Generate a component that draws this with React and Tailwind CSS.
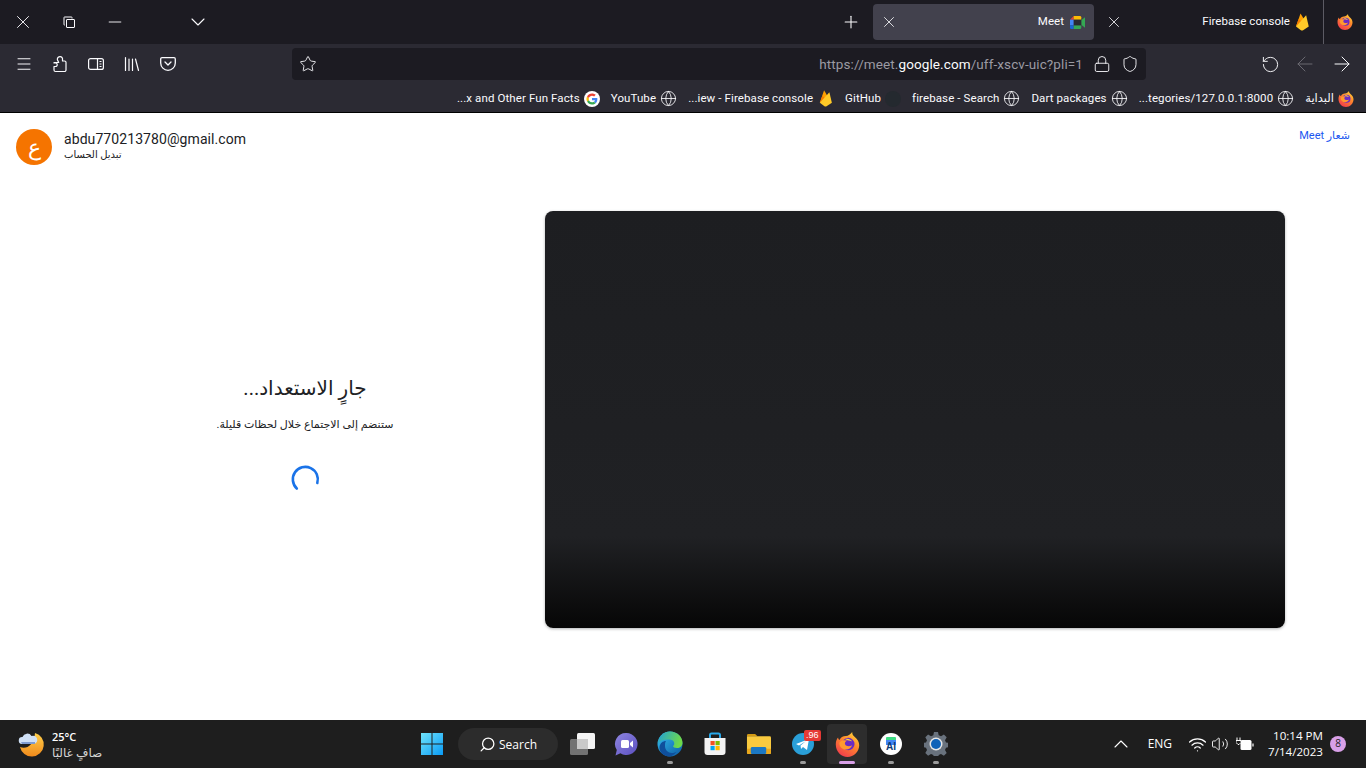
import {Plus, X, Minus, ChevronDown, ChevronUp, Menu, Star, Lock, Shield, RotateCw, ArrowLeft, ArrowRight, Globe, Search, Wifi, Volume2} from "lucide-react";

const uiFont = "font-['Roboto','Noto_Sans','DejaVu_Sans',sans-serif]";

const Firefox = ({size = 16, id = "ff"}) => (
    <svg width={size} height={size} viewBox="0 0 32 32">
        <defs>
            <linearGradient id={id} x1="0.8" y1="0" x2="0.2" y2="1">
                <stop offset="0" stopColor="#ffd43a" />
                <stop offset="0.4" stopColor="#ff8a2b" />
                <stop offset="1" stopColor="#f0364f" />
            </linearGradient>
        </defs>
        <path d="M22 0c0 3 1 4 3 6 4 3 6 7 6 11 0 8-7 15-15 15S1 25 1 16c0-4 1-7 3-9 0 2 1 3 2 3 1-3 4-5 8-5 3 0 6-2 8-5z" fill={`url(#${id})`} />
        <circle cx="17" cy="15.5" r="8" fill="#6a2bc4" />
        <path d="M6 13c3-3 7-3 10-2-3 1-4 3-3 5 1 2 5 3 9 1-2 6-10 7-14 3-2-2-3-5-2-7z" fill="#ff9a2e" />
        <path d="M13 9c3-1 7 0 9 3-3-1-6-1-9-3z" fill="#ffd43a" />
    </svg>
);

const Firebase = ({size = 18}) => (
    <svg width={size} height={size} viewBox="0 0 24 24">
        <path d="M4 18 10 0.5 14.5 8 12 12z" fill="#ffa000" />
        <path d="M4 18 7.5 8 12 12z" fill="#f57c00" />
        <path d="M4 18 17.5 3 21 18 13.5 23a3 3 0 0 1-3 0z" fill="#ffca28" />
    </svg>
);

const GoogleG = () => (
    <svg width="16" height="16" viewBox="0 0 24 24">
        <circle cx="12" cy="12" r="12" fill="#fff" />
        <path d="M20 12.2c0-.6 0-1.1-.2-1.7H12v3.200h4.500c-.2 1-.8 1.900-1.700 2.500l2.700 2.100c1.600-1.500 2.500-3.600 2.500-6.100z" fill="#4285f4" />
        <path d="M12 20.300c2.200 0 4.100-.7 5.500-2l-2.700-2.100c-.8.500-1.700.8-2.800.8-2.100 0-4-1.400-4.600-3.400l-2.800 2.200c1.400 2.700 4.200 4.500 7.400 4.500z" fill="#34a853" />
        <path d="M7.400 13.600c-.3-1-.3-2.100 0-3.200L4.600 8.200c-1.200 2.300-1.200 5.100 0 7.500z" fill="#fbbc05" />
        <path d="M12 7c1.200 0 2.300.4 3.200 1.200l2.400-2.400C16.100 4.500 14.100 3.700 12 3.700 8.800 3.700 6 5.500 4.600 8.200l2.800 2.200C8 8.400 9.900 7 12 7z" fill="#ea4335" />
    </svg>
);

const MeetIcon = () => (
    <svg width="15" height="15" viewBox="0 0 16 16">
        <path d="M0 5 4 1v4z" fill="#ea4335" />
        <path d="M0 5h4v6H0z" fill="#4285f4" />
        <path d="M4 1h6.500A1.500 1.500 0 0 1 12 2.500V5H4z" fill="#fbbc05" />
        <path d="M0 11h4v4H1.500A1.500 1.500 0 0 1 0 13.500z" fill="#1967d2" />
        <path d="M4 11h8v2.500a1.500 1.500 0 0 1-1.500 1.500H4z" fill="#34a853" />
        <path d="M12 5.500 16 2.500v11l-4-3z" fill="#34a853" />
        <path d="M4 5h8v6H4z" fill="#2a2a30" />
    </svg>
);

const PuzzleIcon = () => (
    <svg width="16" height="18" viewBox="0 0 16 17" fill="none" stroke="#fbfbfe" strokeWidth="1.200" strokeLinejoin="round">
        <path d="M2 11h1.500a1.500 1.500 0 0 0 0-3.500H2V7h4.700L6 5.500a2.500 2.500 0 0 1 4-3.500l.5 1V5.500h2A1.500 1.500 0 0 1 14 7v7.500a1.500 1.500 0 0 1-1.500 1.500h-9A1.500 1.500 0 0 1 2 14.500z" />
    </svg>
);

const Library = () => (
    <svg width="16" height="16" viewBox="0 0 16 16" fill="none" stroke="#fbfbfe" strokeWidth="1.200" strokeLinecap="round">
        <path d="M1.500 1.500v13M5 3v11.500M8.500 3v11.500M11.500 3l3 11.500" />
    </svg>
);

const SidebarIcon = () => (
    <svg width="16" height="16" viewBox="0 0 16 16" fill="none" stroke="#fbfbfe" strokeWidth="1.200">
        <rect x="0.600" y="2.600" width="14.800" height="10.800" rx="2" />
        <path d="M9.500 2.600v10.800M11.500 5.500h2M11.500 8h2M11.500 10.500h2" />
    </svg>
);

const Pocket = () => (
    <svg width="16" height="16" viewBox="0 0 16 16" fill="none" stroke="#fbfbfe" strokeWidth="1.300" strokeLinecap="round" strokeLinejoin="round">
        <path d="M2 1.700h12a1.300 1.300 0 0 1 1.300 1.300v4a7.300 7.300 0 0 1-14.600 0V3A1.300 1.300 0 0 1 2 1.700z" />
        <path d="M5 6l3 3 3-3" />
    </svg>
);

const CopyBox = () => (
    <svg width="12" height="12" viewBox="0 0 12 12" fill="none" stroke="#fbfbfe" strokeWidth="1">
        <rect x="3.500" y="3.500" width="8" height="8" rx="0.500" />
        <path d="M1.500 8.500h-.5a.5.500 0 0 1-.500-.500V1a.5.500 0 0 1 .500-.500h7a.5.500 0 0 1 .500.500v1" transform="translate(0.500 0.500)" />
    </svg>
);

const WinLogo = () => (
    <svg width="24" height="24" viewBox="0 0 24 24">
        <defs>
            <linearGradient id="win" x1="0" y1="0" x2="1" y2="1">
                <stop offset="0" stopColor="#6fe3fb" />
                <stop offset="1" stopColor="#0a9bf5" />
            </linearGradient>
        </defs>
        <path d="M1 1h10.500v10.500H1zM12.500 1H23v10.500H12.500zM1 12.500h10.500V23H1zM12.500 12.500H23V23H12.500z" fill="url(#win)" />
    </svg>
);

const TaskView = () => (
    <svg width="26" height="24" viewBox="0 0 26 24">
        <rect x="8" y="1" width="18" height="16" rx="1.500" fill="#f4f4f4" />
        <rect x="1" y="7" width="18" height="16" rx="1.500" fill="#7b7b7b" fillOpacity="0.900" />
        <rect x="8" y="7" width="11" height="10" fill="#c9c9c9" />
    </svg>
);

const ChatIcon = () => (
    <svg width="24" height="24" viewBox="0 0 24 24">
        <defs>
            <linearGradient id="chat" x1="0" y1="0" x2="1" y2="1">
                <stop offset="0" stopColor="#8f86e0" />
                <stop offset="1" stopColor="#5b4fc0" />
            </linearGradient>
        </defs>
        <path d="M12.500 1a11 11 0 1 1-6 20.200L1.500 23.500l1.300-5.500A11 11 0 0 1 12.500 1z" fill="url(#chat)" />
        <rect x="7" y="8" width="8" height="8" rx="1.500" fill="#fff" />
        <path d="M16 11l3-2.500v7L16 13z" fill="#fff" />
    </svg>
);

const Edge = () => (
    <svg width="26" height="26" viewBox="0 0 26 26">
        <defs>
            <linearGradient id="edge1" x1="0" y1="0" x2="1" y2="1">
                <stop offset="0" stopColor="#35c1f1" />
                <stop offset="1" stopColor="#0c59a4" />
            </linearGradient>
            <linearGradient id="edge2" x1="0" y1="0" x2="1" y2="0.300">
                <stop offset="0" stopColor="#1fa0d8" />
                <stop offset="1" stopColor="#6ed94a" />
            </linearGradient>
        </defs>
        <circle cx="13" cy="13" r="12.500" fill="url(#edge1)" />
        <path d="M1 12C2 5 7 .5 13 .5c7 0 12.500 5 12.500 11.500 0 3-2.500 5-5.500 5-2.500 0-4-1-4-2 2-1 2-6-3-6.500C8 8 4 9 1 12z" fill="url(#edge2)" />
        <path d="M8 15c0 4 3 7 7 7 1.500 0 3-.3 4.500-1.200-2 3-5 4.700-7.500 4.700C7 25.500 2 21 2.500 16 3 12 6 10 9 10c-1 1-1 3-1 5z" fill="#0f4f9c" />
    </svg>
);

const StoreIcon = () => (
    <svg width="24" height="24" viewBox="0 0 24 24">
        <path d="M7 6V3a1.500 1.500 0 0 1 1.500-1.500h7A1.500 1.500 0 0 1 17 3v3" fill="none" stroke="#28a8ea" strokeWidth="2" />
        <path d="M1.500 6h21v14a3 3 0 0 1-3 3h-15a3 3 0 0 1-3-3z" fill="#f3f3f3" />
        <rect x="7.500" y="9" width="4.200" height="4.200" fill="#f25022" />
        <rect x="12.500" y="9" width="4.200" height="4.200" fill="#7fba00" />
        <rect x="7.500" y="14" width="4.200" height="4.200" fill="#00a4ef" />
        <rect x="12.500" y="14" width="4.200" height="4.200" fill="#ffb900" />
    </svg>
);

const Explorer = () => (
    <svg width="25" height="24" viewBox="0 0 26 24">
        <path d="M1 3a1.500 1.500 0 0 1 1.500-1.500h7L12 4h-11z" fill="#d39a14" />
        <path d="M1 4h23.500A1.500 1.500 0 0 1 26 5.500V21a1.500 1.500 0 0 1-1.500 1.500h-22A1.500 1.500 0 0 1 1 21z" fill="#f9ca3f" />
        <path d="M1 17h25v4a1.500 1.500 0 0 1-1.500 1.500h-22A1.500 1.500 0 0 1 1 21z" fill="#eaa81c" />
        <rect x="5" y="15" width="16" height="7.500" rx="1.500" fill="#1b78c4" />
    </svg>
);

const Telegram = () => (
    <div className="relative w-[22px] h-[22px]">
        <svg width="22" height="22" viewBox="0 0 22 22">
            <circle cx="11" cy="11" r="11" fill="#2a9fd8" />
            <path d="M4 11l13-5-2 11-4-3-2 2-.5-3.500L14 8l-7 4.500z" fill="#fff" />
        </svg>
        <span className="absolute -top-[3px] left-[12px] px-[2px] h-[11px] rounded-[2px] bg-[#e53935] text-white text-[9px] leading-[11px] font-['Liberation_Sans',sans-serif]">.96</span>
    </div>
);

const AiIcon = () => (
    <svg width="22" height="22" viewBox="0 0 22 22">
        <circle cx="11" cy="11" r="11" fill="#fff" />
        <rect x="6" y="4" width="10" height="5" rx="1" fill="#3ddc84" />
        <rect x="6" y="7" width="10" height="5" fill="#4285f4" />
        <text x="11" y="17" textAnchor="middle" fontSize="10" fontWeight="700" fill="#0b3a78" fontFamily="Liberation Sans, sans-serif">AI</text>
    </svg>
);

const Gear = () => (
    <svg width="24" height="24" viewBox="0 0 24 24">
        <path d="M10 0h4l.7 3.200 2.300 1 2.900-1.700 2.800 2.800-1.700 2.900 1 2.300 3 .5v4l-3 .7-1 2.300 1.700 2.900-2.800 2.800-2.900-1.700-2.300 1-.7 3h-4l-.7-3-2.300-1-2.900 1.700-2.800-2.800 1.700-2.900-1-2.300-3-.7v-4l3-.5 1-2.300L1.300 5.300 4.100 2.500 7 4.200l2.300-1z" fill="#69727d" />
        <circle cx="12" cy="12" r="6.500" fill="#e6e6e6" />
        <circle cx="12" cy="12" r="5" fill="#0f62b8" />
    </svg>
);

const Moon = () => (
    <svg width="28" height="28" viewBox="0 0 28 28">
        <defs>
            <linearGradient id="moon" x1="0.500" y1="0" x2="0.500" y2="1">
                <stop offset="0" stopColor="#ffd04a" />
                <stop offset="1" stopColor="#f08a1c" />
            </linearGradient>
        </defs>
        <path d="M17 3a12 12 0 1 1-15 14c6 2.500 14-1 15-14z" fill="url(#moon)" />
        <path d="M4 14a3.500 3.500 0 0 1 .5-7 5 5 0 0 1 9-1 4 4 0 0 1 3 8z" fill="#cfe0f6" />
        <path d="M3 12h14v2H4z" fill="#7e9bd0" />
    </svg>
);

const Battery = () => (
    <svg width="18" height="15" viewBox="0 0 18 15" fill="none">
        <rect x="4.500" y="3" width="11" height="10" rx="1.500" fill="#fff" />
        <path d="M17 6.500v3" stroke="#fff" strokeWidth="1.200" />
        <path d="M1 0.500v3M4 0.500v3M0 3.500h5v2l-2 2H2L0 5.500z" stroke="#fff" strokeWidth="1" fill="#1e1e1e" />
    </svg>
);

const Spinner = () => (
    <svg width="32" height="32" viewBox="0 0 32 32" fill="none">
        <path d="M7.800 24.500A12.500 12.500 0 1 1 28.300 19" stroke="#1a73e8" strokeWidth="2.600" strokeLinecap="round" />
    </svg>
);

const GlobeIcon = () => <Globe size={17} strokeWidth={1.2} className="text-[#fbfbfe]" />;

const bookmarks = [
    {label: "...x and Other Fun Facts", icon: <GoogleG />},
    {label: "YouTube", icon: <GlobeIcon />},
    {label: "...iew - Firebase console", icon: <Firebase size={17} />},
    {label: "GitHub", icon: <span className="w-4 h-4 rounded-full bg-[#24292f]" />},
    {label: "firebase - Search", icon: <GlobeIcon />},
    {label: "Dart packages", icon: <GlobeIcon />},
    {label: "...tegories/127.0.0.1:8000", icon: <GlobeIcon />},
    {label: "البداية", icon: <Firefox id="ff-bookmark" />},
];

const apps = [
    {el: <TaskView />},
    {el: <ChatIcon />},
    {el: <Edge />, dot: true},
    {el: <StoreIcon />},
    {el: <Explorer />},
    {el: <Telegram />, dot: true},
    {el: <Firefox size={25} id="ff-task" />, active: true},
    {el: <AiIcon />, dot: true},
    {el: <Gear />, dot: true},
];

const App = () => {
    return (
        <div className={`w-[1366px] h-[768px] flex flex-col overflow-hidden bg-white ${uiFont}`}>
            {/* tabs */}
            <div className="h-[44px] shrink-0 bg-[#1c1b22] flex items-center text-[#fbfbfe] text-[11.5px] tracking-[0.05px]">
                <div className="w-[46px] flex justify-center"><X size={22} strokeWidth={1} /></div>
                <div className="w-[46px] flex justify-center"><CopyBox /></div>
                <div className="w-[46px] flex justify-center"><Minus size={20} strokeWidth={1.1} /></div>
                <div className="w-[120px] flex justify-center"><ChevronDown size={24} strokeWidth={1.1} /></div>
                <div className="flex-1" />
                <div className="w-[40px] flex justify-center"><Plus size={20} strokeWidth={1.3} /></div>
                <div className="w-[221px] h-[36px] ml-[2px] pl-[7px] pr-[9px] rounded bg-[#42414d] flex items-center justify-between">
                    <X size={18} strokeWidth={1.1} />
                    <div className="flex items-center gap-[6px]">
                        <span>Meet</span>
                        <MeetIcon />
                    </div>
                </div>
                <div className="w-[40px] flex justify-center"><X size={18} strokeWidth={1.1} /></div>
                <div className="w-[189px] pr-[12px] flex items-center justify-end gap-[3px]">
                    <span>Firebase console</span>
                    <Firebase />
                </div>
                <div className="w-px h-[44px] bg-[#5c5b64]" />
                <div className="w-[42px] flex justify-center"><Firefox id="ff-tab" /></div>
            </div>

            {/* toolbar */}
            <div className="h-[40px] shrink-0 bg-[#2b2a33] flex items-center text-[#fbfbfe]">
                <div className="w-[292px] pl-[15px] flex items-center gap-[20px]">
                    <Menu size={18} strokeWidth={1.3} className="-mr-[1px]" />
                    <PuzzleIcon />
                    <SidebarIcon />
                    <Library />
                    <Pocket />
                </div>
                <div className="w-[854px] h-[32px] rounded bg-[#1c1b22] flex items-center pl-[7px] pr-[7px]">
                    <Star size={18} strokeWidth={1.2} />
                    <div className="flex-1 pt-[1px] text-right text-[13.5px] tracking-[0.1px] text-[#9b9aa2] pr-[10px]">
                        https://meet.<span className="text-[#fbfbfe]">google.com</span>/uff-xscv-uic?pli=1
                    </div>
                    <Lock size={18} strokeWidth={1.2} />
                    <Shield size={18} strokeWidth={1.2} className="ml-[10px]" />
                </div>
                <div className="flex-1 flex items-center justify-end gap-[13px] pr-[12px]">
                    <RotateCw size={19} strokeWidth={1.2} className="-scale-x-100" />
                    <ArrowLeft size={24} strokeWidth={1} className="text-[#6a6971]" />
                    <ArrowRight size={24} strokeWidth={1} />
                </div>
            </div>

            {/* bookmarks */}
            <div className="h-[29px] shrink-0 pt-[1px] bg-[#2b2a33] border-b border-black flex items-center justify-end gap-[11px] pr-[12px] text-[11.5px] tracking-[0.1px] text-[#fbfbfe]">
                {bookmarks.map((b) => (
                    <div key={b.label} className="flex items-center gap-[4px] whitespace-nowrap">
                        <span>{b.label}</span>
                        {b.icon}
                    </div>
                ))}
            </div>

            {/* page */}
            <div className="flex-1 flex flex-col text-[#202124] font-['Roboto','DejaVu_Sans',sans-serif]">
                <div className="h-[98px] shrink-0 flex justify-between items-start pt-[16px] pl-[16px] pr-[16px]">
                    <div className="flex items-center gap-[12px]">
                        <div className="w-[36px] h-[36px] rounded-full bg-[#f57400] text-white text-[22px] font-light flex items-center justify-center">ع</div>
                        <div className="-mt-[2px]">
                            <div className="text-sm leading-[18px] tracking-[0.08px]">abdu770213780@gmail.com</div>
                            <div className="text-[10px] leading-[14px]">تبديل الحساب</div>
                        </div>
                    </div>
                    <div className="text-[11px] text-[#1a56f0] -mt-[1px]" dir="rtl">شعار Meet</div>
                </div>
                <div className="flex-1 flex">
                    <div className="w-[545px] h-[417px] pl-[65px] pt-[31px] flex flex-col items-center justify-center">
                        <div className="text-[20px] leading-[28px]" dir="rtl">جارٍ الاستعداد...</div>
                        <div className="text-[11px] mt-[15px]" dir="rtl">ستنضم إلى الاجتماع خلال لحظات قليلة.</div>
                        <div className="mt-[31px]"><Spinner /></div>
                    </div>
                    <div className="w-[740px] h-[417px] rounded-lg shadow-[0_1px_3px_rgba(60,64,67,0.4)] bg-[linear-gradient(to_bottom,#1d1e21_0%,#202124_78%,#060606_100%)]" />
                </div>
            </div>

            {/* taskbar */}
            <div className="h-[48px] shrink-0 bg-[#1e1e1e] flex items-center text-white font-['Open_Sans','DejaVu_Sans',sans-serif]">
                <div className="w-[420px] pl-[18px] flex items-center gap-[6px]">
                    <Moon />
                    <div className="leading-[16px] mt-[2px]">
                        <div className="text-[11px] font-semibold">25°C</div>
                        <div className="text-xs text-[#d5d5d5]">صافٍ غالبًا</div>
                    </div>
                </div>
                <div className="w-[24px] flex justify-center"><WinLogo /></div>
                <div className="w-[100px] h-[32px] ml-[14px] rounded-full bg-[#2c2c2c] flex items-center justify-center gap-[3px] text-xs pt-[1px]">
                    <Search size={17} strokeWidth={1.8} className="-scale-x-100" />
                    <span>Search</span>
                </div>
                <div className="flex ml-[2px]">
                    {apps.map((a, i) => (
                        <div key={i} className="relative w-[44.2px] h-[40px] flex items-center justify-center">
                            {a.active && <span className="absolute inset-y-0 left-[2px] right-[2px] rounded bg-[#2d2d2d]" />}
                            <div className="relative">{a.el}</div>
                            {a.dot && <span className="absolute bottom-0 w-[6px] h-[3px] rounded-full bg-[#9a9a9a]" />}
                            {a.active && <span className="absolute bottom-0 w-[16px] h-[3px] rounded-full bg-[#d9a0e8]" />}
                        </div>
                    ))}
                </div>
                <div className="flex-1 flex items-center justify-end pr-[20px] text-xs">
                    <ChevronUp size={24} strokeWidth={1.1} />
                    <span className="ml-[15px]">ENG</span>
                    <Wifi size={19} strokeWidth={1.6} className="ml-[16px]" />
                    <Volume2 size={18} strokeWidth={1.2} className="ml-[4px]" />
                    <div className="ml-[7px]"><Battery /></div>
                    <div className="ml-[14px] text-right text-[11.6px] leading-[16px]">
                        <div>10:14 PM</div>
                        <div>7/14/2023</div>
                    </div>
                    <div className="ml-[7px] w-[16px] h-[16px] rounded-full bg-[#d9a0e8] text-[#222] text-[10px] flex items-center justify-center">8</div>
                </div>
            </div>
        </div>
    );
};

export default App;
